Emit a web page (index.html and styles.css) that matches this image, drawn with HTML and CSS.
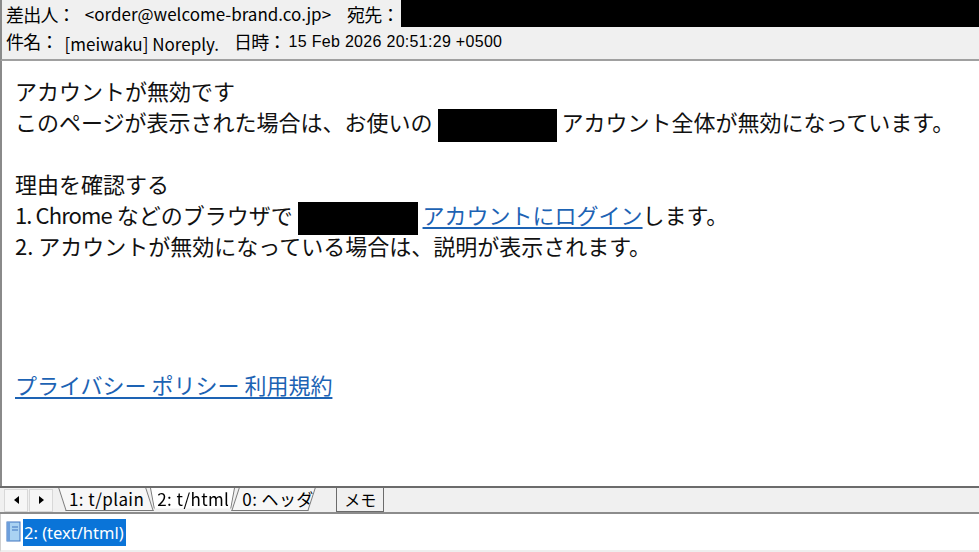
FILE: index.html
```html
<!DOCTYPE html>
<html lang="ja">
<head>
<meta charset="utf-8">
<title>mail</title>
<link rel="stylesheet" href="styles.css">
</head>
<body>
<div class="window">
  <div class="header">
    <div class="hrow">
      <span class="label">差出人：</span>
      <span class="val from">&lt;order@welcome-brand.co.jp&gt;</span>
      <span class="label to-label">宛先：</span>
      <span class="redact-to"></span>
    </div>
    <div class="hrow row2">
      <span class="label">件名：</span>
      <span class="val subj">[meiwaku] Noreply.</span>
      <span class="label date-label">日時：</span>
      <span class="date">15 Feb 2026 20:51:29 +0500</span>
    </div>
  </div>
  <div class="body">
    <div class="line">アカウントが無効です</div>
    <div class="line">このページが表示された場合は、お使いの <span class="redact r1"></span> アカウント全体が無効になっています。</div>
    <div class="line blank"></div>
    <div class="line">理由を確認する</div>
    <div class="line"><span class="latin">1. Chrome</span> などのブラウザで <span class="redact r2"></span> <a class="link" href="#">アカウントにログイン</a>します。</div>
    <div class="line">2. アカウントが無効になっている場合は、説明が表示されます。</div>
    <div class="line footer"><a class="link" href="#">プライバシー ポリシー 利用規約</a></div>
  </div>
  <div class="tabbar">
    <span class="navbtn"><svg width="8" height="10" viewBox="0 0 8 10"><polygon points="7,1 7,9 2,5" fill="#000"/></svg></span>
    <span class="navbtn"><svg width="8" height="10" viewBox="0 0 8 10"><polygon points="2,1 2,9 7,5" fill="#000"/></svg></span>
    <div class="tabs">
      <span class="tab left">1: t/plain</span>
      <span class="tab active">2: t/html</span>
      <span class="tab right">0: ヘッダ</span>
    </div>
    <span class="memo">メモ</span>
  </div>
  <div class="parts">
    <svg class="picon" width="15" height="21" viewBox="0 0 15 21">
      <rect x="1" y="1" width="13" height="19" fill="#a9d2f2" stroke="#3f74bf"/>
      <rect x="1" y="1" width="3" height="19" fill="#6d9fdc"/>
      <line x1="6" y1="6" x2="12" y2="6" stroke="#3f74bf"/>
      <line x1="6" y1="9" x2="12" y2="9" stroke="#3f74bf"/>
    </svg>
    <span class="sel">2: (text/html)</span>
  </div>
</div>
</body>
</html>
```
FILE: styles.css
```css
html, body {
  margin: 0;
  padding: 0;
  background: #fff;
}
.window {
  width: 979px;
  height: 552px;
  display: flex;
  flex-direction: column;
  overflow: hidden;
  font-family: "Noto Sans CJK JP", "Noto Sans", sans-serif;
}
.header {
  background: #f0f0f0;
  height: 59px;
  flex: none;
  border-left: 2px solid #8a8a8a;
  border-bottom: 2px solid #a0a0a0;
  display: flex;
  flex-direction: column;
}
.hrow {
  display: flex;
  align-items: center;
  height: 27px;
  white-space: nowrap;
}
.label {
  font-size: 18px;
  color: #000;
  padding-left: 4px;
  letter-spacing: -0.8px;
}
.val {
  font-size: 17px;
  color: #000;
}
.from {
  margin-left: 10px;
}
.to-label {
  margin-left: 12px;
}
.redact-to {
  flex: 1;
  height: 27px;
  background: #000;
  margin-left: 2px;
  align-self: flex-start;
}
.row2 {
  height: 28px;
}
.subj {
  margin-left: 7px;
  padding-top: 5px;
}
.date-label {
  margin-left: 11px;
}
.date {
  font-family: "Liberation Sans", Arial, sans-serif;
  font-size: 16px;
  margin-left: 3px;
  letter-spacing: 0.3px;
  padding-top: 1px;
}
.body {
  flex: none;
  height: 411px;
  border-left: 2px solid #8a8a8a;
  padding: 14px 0 0 13px;
  font-size: 22px;
  color: #111;
}
.line {
  height: 31px;
  line-height: 31px;
  white-space: nowrap;
}
.latin {
  letter-spacing: -0.9px;
}
.redact {
  display: inline-block;
  background: #000;
  vertical-align: middle;
  height: 33px;
}
.r1 {
  width: 119px;
}
.r2 {
  width: 120px;
}
.link {
  color: #1d63b4;
  text-decoration: underline;
  text-underline-offset: 3px;
}
.footer {
  margin-top: 108px;
}
.tabbar {
  flex: none;
  height: 24px;
  background: #f0f0f0;
  border-top: 2px solid #6b6b6b;
  border-bottom: 2px solid #8c8c8c;
  display: flex;
  align-items: center;
  padding-left: 4px;
}
.navbtn {
  width: 22px;
  height: 21px;
  border: 1px solid #d8d8d8;
  background: #f6f6f6;
  display: flex;
  align-items: center;
  justify-content: center;
  margin-right: 1px;
}
.tabs {
  display: flex;
  margin-left: 8px;
  height: 24px;
  align-items: stretch;
}
.tab {
  position: relative;
  font-family: "Noto Sans CJK JP", sans-serif;
  font-size: 17px;
  letter-spacing: 0.4px;
  color: #000;
  padding: 0 6px 0 7px;
  line-height: 22px;
  z-index: 1;
  white-space: nowrap;
}
.tab::before {
  content: "";
  position: absolute;
  top: 0;
  bottom: 1px;
  left: 0;
  right: 0;
  border: 1px solid #7a7a7a;
  border-top: none;
  background: #f7f7f7;
  z-index: -1;
}
.tab.left::before {
  transform: skewX(18deg);
}
.tab.right::before {
  transform: skewX(-18deg);
}
.tab.active {
  z-index: 2;
}
.tab.active::before {
  background: #fff;
  border: none;
  border-left: 1px solid #7a7a7a;
  border-right: 1px solid #7a7a7a;
  transform: perspective(40px) rotateX(-10deg);
  transform-origin: top;
}
.tab.right {
  width: 64px;
}
.memo {
  margin-left: 24px;
  width: 46px;
  height: 23px;
  align-self: flex-start;
  border: 1px solid #6b6b6b;
  border-top: none;
  background: #f0f0f0;
  font-size: 16px;
  text-align: center;
  line-height: 22px;
}
.parts {
  flex: 1;
  display: flex;
  align-items: center;
  padding-left: 5px;
  border-bottom: 2px solid #eeeeee;
  border-left: 1px solid #cfcfcf;
}
.picon {
  margin-top: -1px;
}
.sel {
  margin-left: 2px;
  background: #0a74d8;
  color: #fff;
  font-family: "Noto Sans", sans-serif;
  font-size: 16.5px;
  height: 27px;
  line-height: 27px;
  padding: 0 2px 0 1px;
}
```
